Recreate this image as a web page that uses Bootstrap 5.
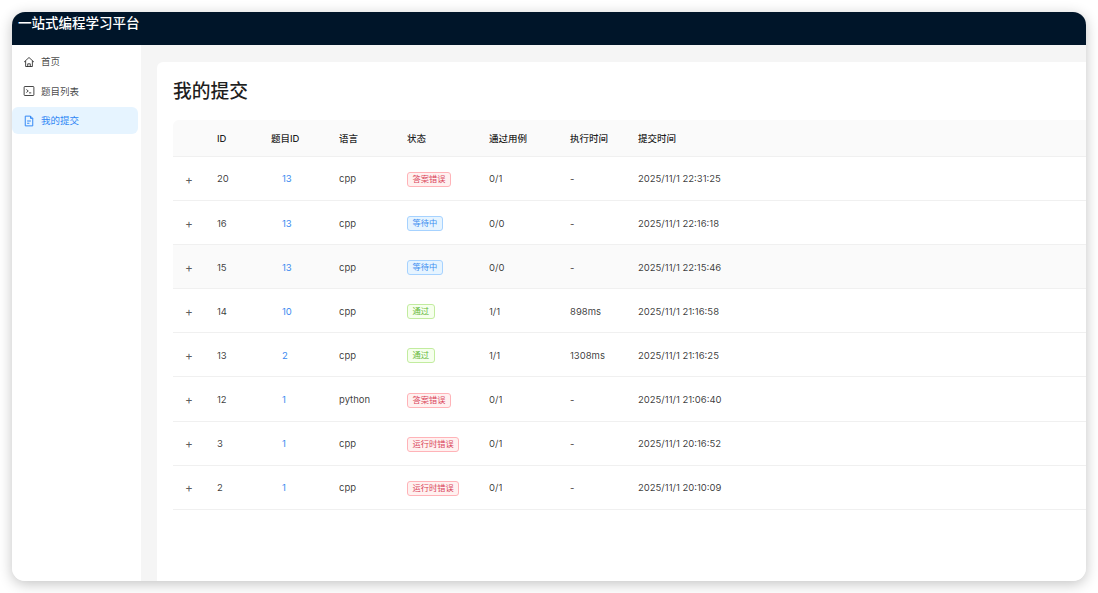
<!DOCTYPE html>
<html lang="zh-CN">
<head>
<meta charset="utf-8">
<title>我的提交</title>
<link href="https://cdn.jsdelivr.net/npm/bootstrap@5.3.0/dist/css/bootstrap.min.css" rel="stylesheet">
<style>
html,body{height:100%;}
body{background:#fff;font-family:Inter,"Noto Sans CJK SC",sans-serif;font-size:9.5px;color:rgba(0,0,0,.78);padding:12px;overflow:hidden;}
.app-window{height:569px;width:1074px;border-radius:13px;overflow:hidden;box-shadow:0 3px 14px rgba(0,0,0,.24);background:#f5f5f5;}
.app-header{height:32.5px;background:#001529;color:#fff;font-size:13.5px;font-weight:500;line-height:23px;padding-left:6px;flex:none;}
.app-side{width:129px;background:#fff;flex:none;padding:3.5px 3px 0 0;}
.side-item{height:26.5px;border-radius:6px;padding:2px 0 0 11px;gap:6px;color:rgba(0,0,0,.74);font-size:9.5px;margin-bottom:3px;}
.side-item.on{background:#e6f4ff;color:#2f86f5;}
.side-item svg{width:12px;height:12px;flex:none;margin-top:-1px;}
.app-main{padding:17.5px 0 0 16px;min-width:0;}
.app-panel{height:100%;background:#fff;padding:16.5px 0 0 16px;border-radius:6px 0 0 0;overflow:hidden;}
.panel-title{font-size:18.75px;font-weight:500;line-height:25px;margin:0 0 16px;color:rgba(0,0,0,.88);}
.sub-table{table-layout:fixed;width:913px;margin:0;font-size:9.5px;--bs-table-bg:transparent;}
.sub-table th,.sub-table td{padding:2px 8px 0;vertical-align:middle;color:rgba(0,0,0,.78);}
.sub-table th{height:37px;padding-top:3px;background:#fafafa;font-weight:500;border-bottom:1px solid #f0f0f0;color:rgba(0,0,0,.88);}
.sub-table thead th:first-child{border-top-left-radius:6px;}
.sub-table td{height:44.1px;border-bottom:1px solid #f0f0f0;}
.sub-table tr.hovered td{background:#fafafa;}
.sub-table td.row-exp{color:rgba(0,0,0,.65);font-size:12px;text-align:center;padding-left:4px;}
.task-link{color:#3d8bf0;text-decoration:none;padding-left:11px;display:inline-block;}
.state-tag{display:inline-block;font-size:8.25px;line-height:13px;padding:0 4.6px;border:1px solid;border-radius:3px;vertical-align:middle;}
.tag-err{color:#d9435a;background:#fff1f0;border-color:#ffb3b8;}
.tag-wait{color:#3f8ff0;background:#e6f4ff;border-color:#a6d2ff;}
.tag-ok{color:#64b83a;background:#f6ffed;border-color:#c2ec9f;}
</style>
</head>
<body>
<div class="app-window d-flex flex-column">
  <header class="app-header">一站式编程学习平台</header>
  <div class="d-flex flex-grow-1" style="min-height:0">
    <nav class="app-side">
      <div class="side-item d-flex align-items-center">
        <svg viewBox="0 0 16 16" fill="none" stroke="currentColor" stroke-width="1.3" stroke-linejoin="round"><path d="M1.5 8 8 2l6.5 6M3.5 6.6V14h9V6.6"/><path d="M6.3 14v-3.6h3.4V14"/></svg>首页
      </div>
      <div class="side-item d-flex align-items-center">
        <svg viewBox="0 0 16 16" fill="none" stroke="currentColor" stroke-width="1.3"><rect x="1.5" y="2" width="13" height="12" rx="1"/><path d="m4.5 6 2.5 2-2.5 2M8 10.5h3"/></svg>题目列表
      </div>
      <div class="side-item on d-flex align-items-center">
        <svg viewBox="0 0 16 16" fill="none" stroke="currentColor" stroke-width="1.3" stroke-linejoin="round"><path d="M3 1.5h7l3 3v10H3z"/><path d="M10 1.5v3h3M5.5 8h5M5.5 11h3"/></svg>我的提交
      </div>
    </nav>
    <main class="app-main flex-grow-1">
      <div class="app-panel">
        <h1 class="panel-title">我的提交</h1>
        <table class="table sub-table">
          <colgroup><col style="width:36px"><col style="width:54px"><col style="width:68px"><col style="width:68px"><col style="width:82px"><col style="width:81px"><col style="width:68px"><col></colgroup>
          <thead><tr><th></th><th>ID</th><th>题目ID</th><th>语言</th><th>状态</th><th>通过用例</th><th>执行时间</th><th>提交时间</th></tr></thead>
          <tbody>
            <tr><td class="row-exp">+</td><td>20</td><td><a class="task-link" href="#">13</a></td><td>cpp</td><td><span class="state-tag tag-err">答案错误</span></td><td>0/1</td><td>-</td><td>2025/11/1 22:31:25</td></tr>
            <tr><td class="row-exp">+</td><td>16</td><td><a class="task-link" href="#">13</a></td><td>cpp</td><td><span class="state-tag tag-wait">等待中</span></td><td>0/0</td><td>-</td><td>2025/11/1 22:16:18</td></tr>
            <tr class="hovered"><td class="row-exp">+</td><td>15</td><td><a class="task-link" href="#">13</a></td><td>cpp</td><td><span class="state-tag tag-wait">等待中</span></td><td>0/0</td><td>-</td><td>2025/11/1 22:15:46</td></tr>
            <tr><td class="row-exp">+</td><td>14</td><td><a class="task-link" href="#">10</a></td><td>cpp</td><td><span class="state-tag tag-ok">通过</span></td><td>1/1</td><td>898ms</td><td>2025/11/1 21:16:58</td></tr>
            <tr><td class="row-exp">+</td><td>13</td><td><a class="task-link" href="#">2</a></td><td>cpp</td><td><span class="state-tag tag-ok">通过</span></td><td>1/1</td><td>1308ms</td><td>2025/11/1 21:16:25</td></tr>
            <tr><td class="row-exp">+</td><td>12</td><td><a class="task-link" href="#">1</a></td><td>python</td><td><span class="state-tag tag-err">答案错误</span></td><td>0/1</td><td>-</td><td>2025/11/1 21:06:40</td></tr>
            <tr><td class="row-exp">+</td><td>3</td><td><a class="task-link" href="#">1</a></td><td>cpp</td><td><span class="state-tag tag-err">运行时错误</span></td><td>0/1</td><td>-</td><td>2025/11/1 20:16:52</td></tr>
            <tr><td class="row-exp">+</td><td>2</td><td><a class="task-link" href="#">1</a></td><td>cpp</td><td><span class="state-tag tag-err">运行时错误</span></td><td>0/1</td><td>-</td><td>2025/11/1 20:10:09</td></tr>
          </tbody>
        </table>
      </div>
    </main>
  </div>
</div>
<script src="https://cdn.jsdelivr.net/npm/bootstrap@5.3.0/dist/js/bootstrap.bundle.min.js"></script>
</body>
</html>
